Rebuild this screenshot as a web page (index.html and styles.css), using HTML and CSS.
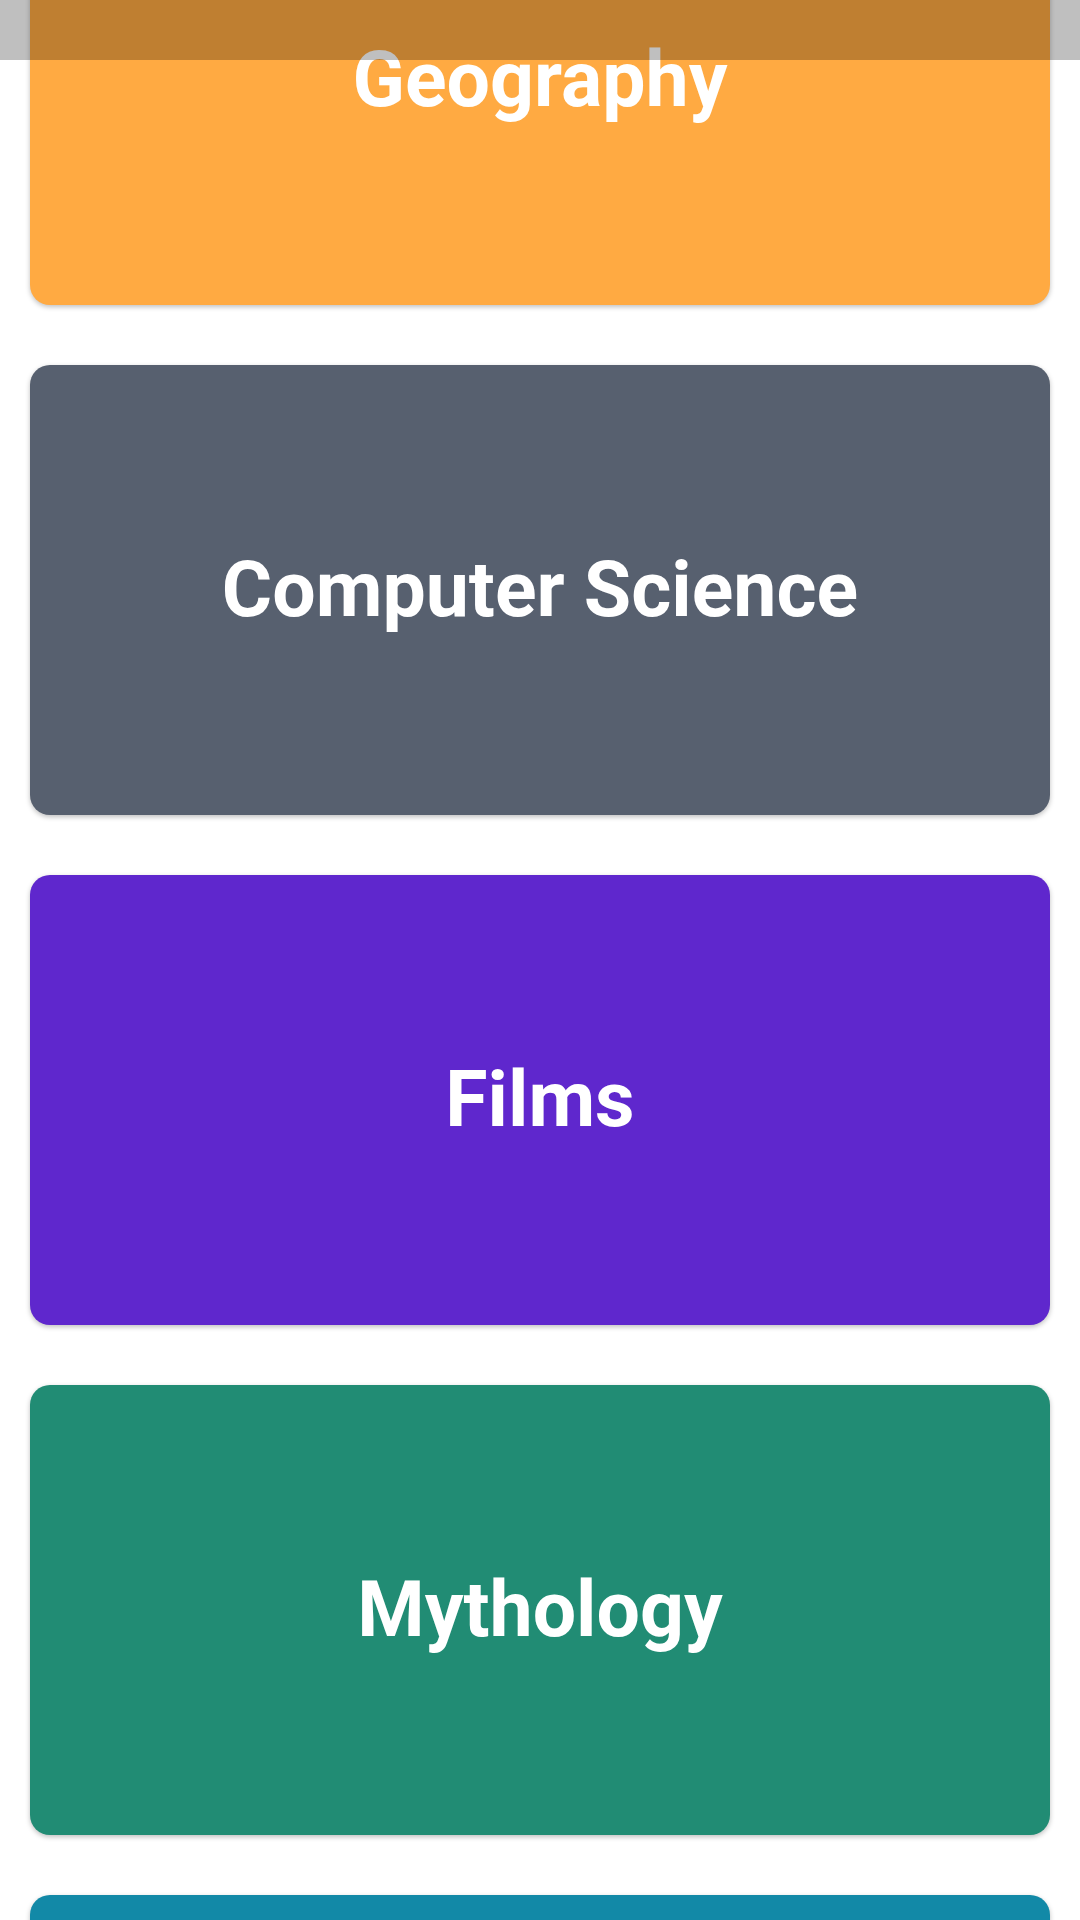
FILE: index.html
```html
<!DOCTYPE html>
<html>
<head>
<meta charset="utf-8">
<link rel="stylesheet" href="styles.css">
</head>
<body>
<div class="statusbar"></div>
<div class="list">
  <div class="card orange"><span>Geography</span></div>
  <div class="card grey"><span>Computer Science</span></div>
  <div class="card purple"><span>Films</span></div>
  <div class="card green"><span>Mythology</span></div>
  <div class="card teal"></div>
</div>
</body>
</html>
```

FILE: styles.css
```css
html, body {
  margin: 0;
  padding: 0;
  background: #ffffff;
  width: 1080px;
  height: 1920px;
  overflow: hidden;
}
.statusbar {
  position: fixed;
  top: 0;
  left: 0;
  width: 1080px;
  height: 60px;
  background: rgba(0, 0, 0, 0.25);
  z-index: 10;
}
.list {
  display: flex;
  flex-direction: column;
  gap: 60px;
  padding: 0 30px;
  margin-top: -145px;
}
.card {
  height: 450px;
  border-radius: 20px;
  display: flex;
  align-items: center;
  justify-content: center;
  box-shadow: 0 2px 5px rgba(0, 0, 0, 0.25);
  font-family: Roboto, "Liberation Sans", sans-serif;
  font-weight: 700;
  font-size: 77px;
  color: #ffffff;
}
.orange { background: #ffaa42; }
.grey { background: #57606f; }
.purple { background: #5f27cd; }
.green { background: #218c74; }
.teal { background: #1289a7; }
```
